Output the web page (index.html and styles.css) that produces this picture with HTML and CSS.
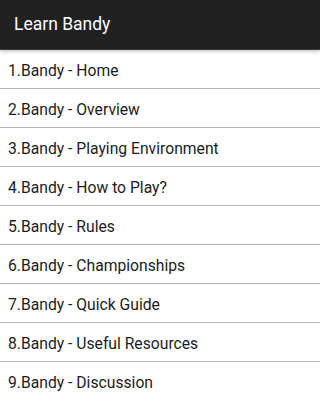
FILE: index.html
```html
<!DOCTYPE html>
<html>
<head>
<meta charset="utf-8">
<link rel="stylesheet" href="styles.css">
</head>
<body>
<header class="appbar">Learn Bandy</header>
<ul class="list">
  <li class="item">1.Bandy - Home</li>
  <li class="item">2.Bandy - Overview</li>
  <li class="item">3.Bandy - Playing Environment</li>
  <li class="item">4.Bandy - How to Play?</li>
  <li class="item">5.Bandy - Rules</li>
  <li class="item">6.Bandy - Championships</li>
  <li class="item">7.Bandy - Quick Guide</li>
  <li class="item">8.Bandy - Useful Resources</li>
  <li class="item">9.Bandy - Discussion</li>
</ul>
</body>
</html>
```
FILE: styles.css
```css
html, body {
  margin: 0;
  padding: 0;
  background: #ffffff;
  font-family: Roboto, "Liberation Sans", sans-serif;
  overflow: hidden;
}
.appbar {
  position: relative;
  z-index: 1;
  height: 50px;
  display: flex;
  align-items: center;
  padding: 0 0 1px 14px;
  box-sizing: border-box;
  background: #212121;
  border-bottom: 1px solid #3a3a3a;
  color: #ffffff;
  font-size: 17.5px;
  box-shadow: 0 1px 4px rgba(0, 0, 0, 0.3);
}
.list {
  list-style: none;
  margin: 0;
  padding: 0;
}
.item {
  height: 39px;
  box-sizing: border-box;
  display: flex;
  align-items: center;
  padding: 3px 0 0 8px;
  border-bottom: 1px solid #b4b4b4;
  color: #1c1c1c;
  font-size: 15.7px;
}
```
